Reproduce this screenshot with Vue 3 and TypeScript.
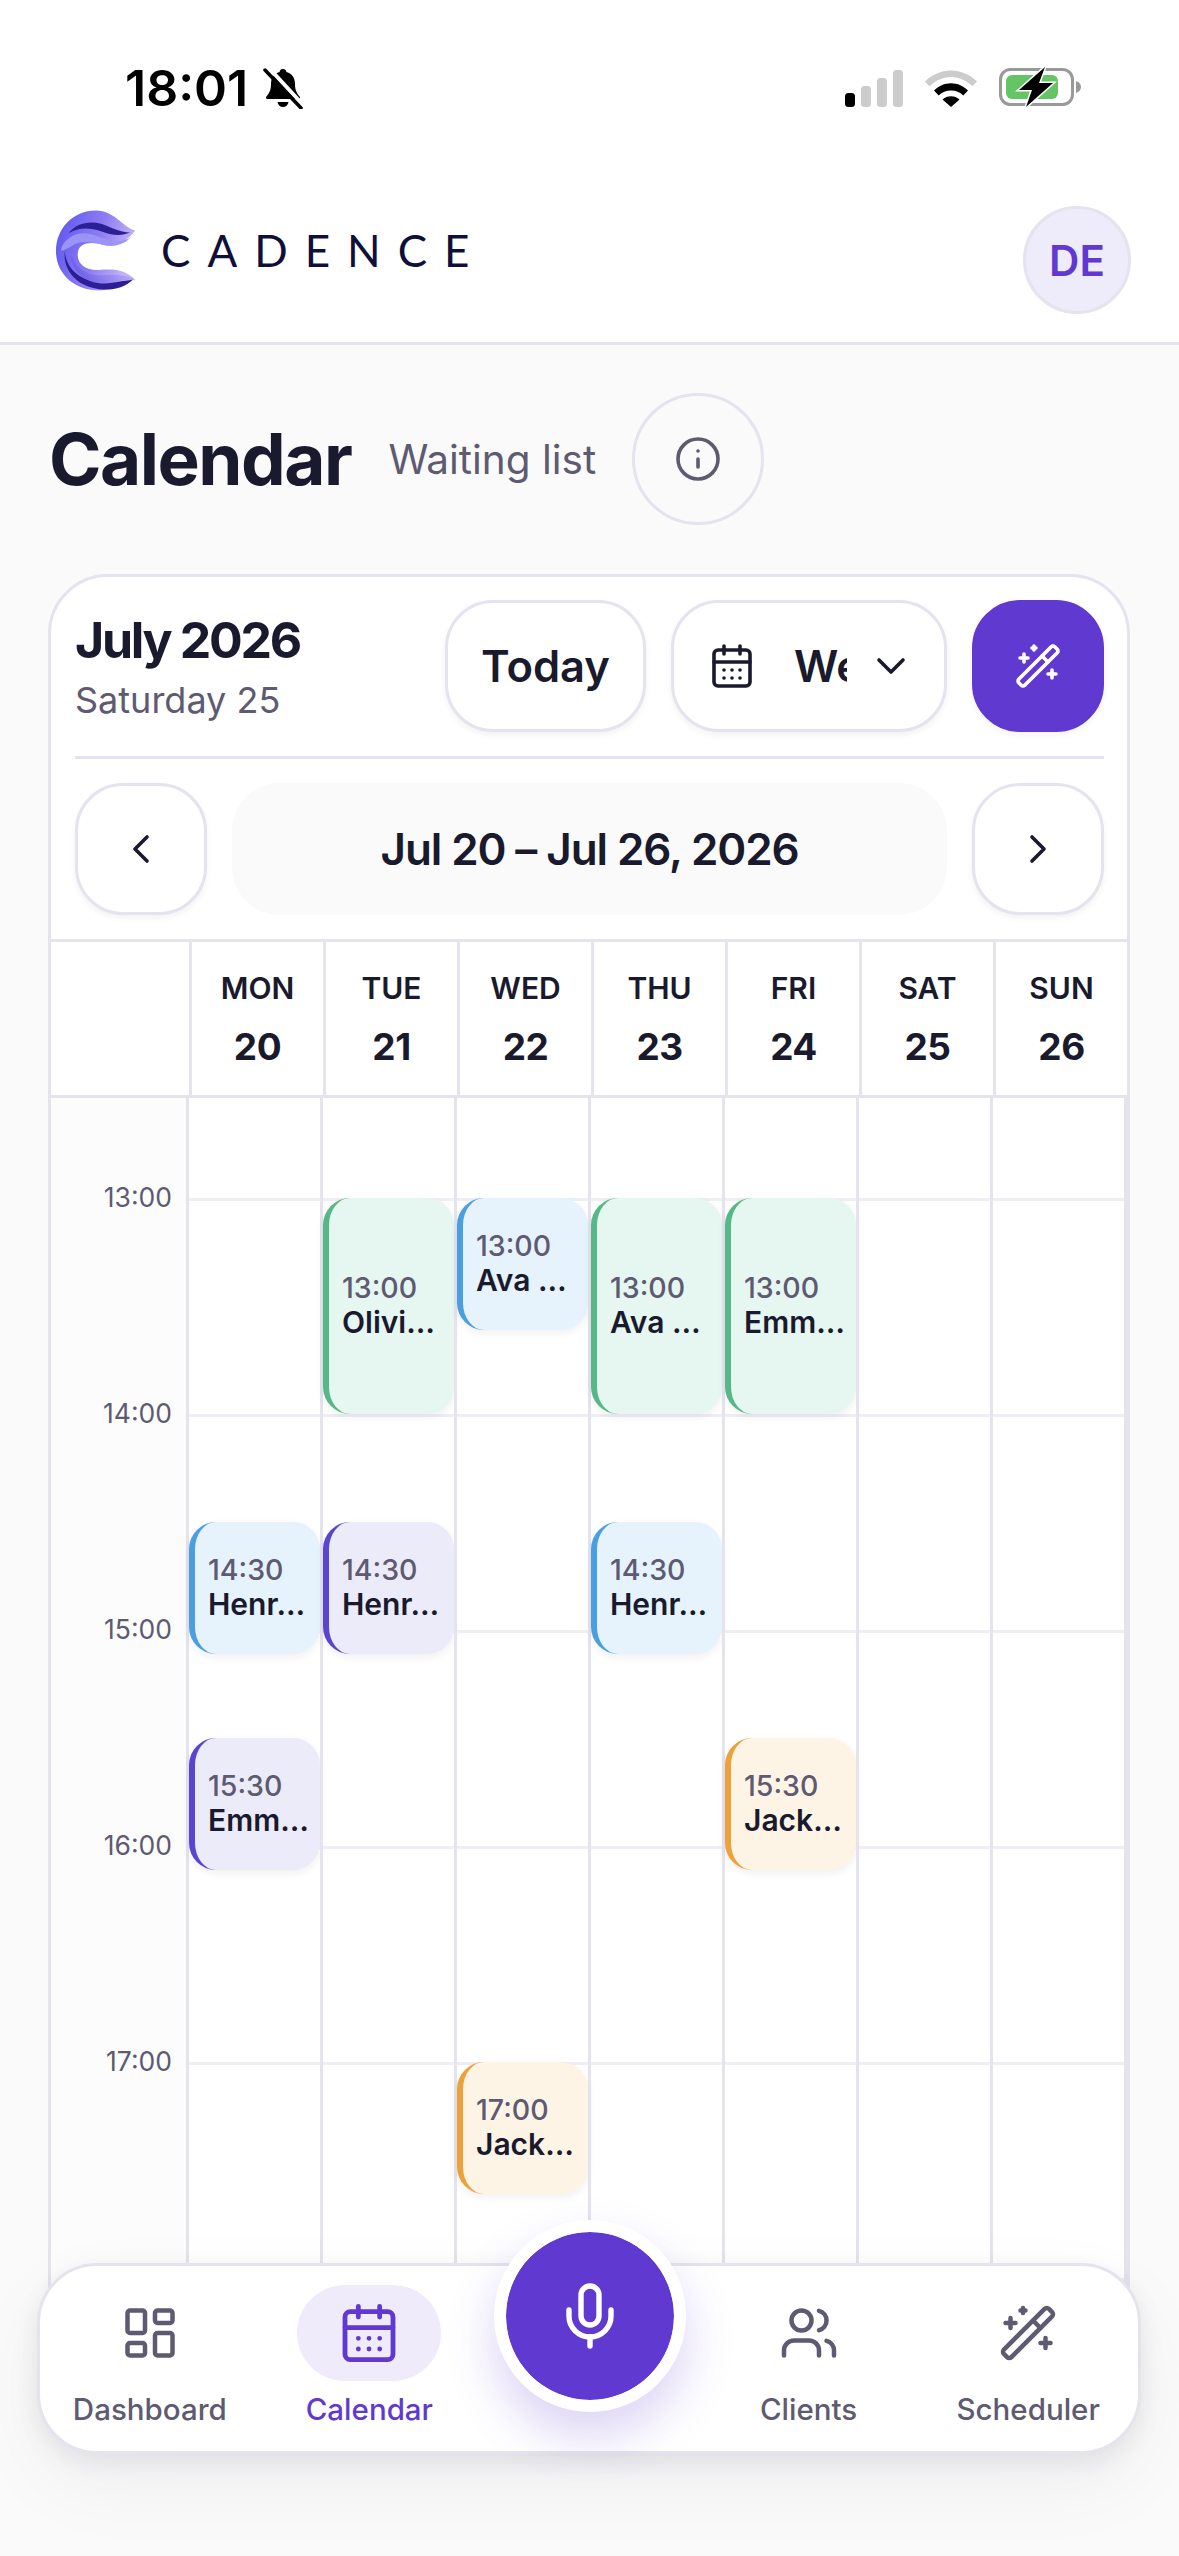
<template>
  <div class="page">
    <div class="status">
      <div class="status-left">
        <span class="clock">18:01</span>
        <svg class="bell" viewBox="0 0 40 42" width="40" height="42">
          <path d="M20 2c2 0 3.200 1.300 3.400 3 6 1.400 8.600 6.400 8.600 12 0 6 1.600 9 4.600 12.500.9 1.100.3 2.500-1.200 2.500H4.600c-1.500 0-2.100-1.400-1.200-2.500C6.400 26 8 23 8 17c0-5.600 2.600-10.600 8.600-12C16.800 3.300 18 2 20 2z" fill="#000" />
          <path d="M14.500 35h11c-.5 3-2.700 5-5.500 5s-5-2-5.500-5z" fill="#000" />
          <path d="M5 0l36 39" stroke="#fff" stroke-width="4" />
          <path d="M2 3l36 38" stroke="#000" stroke-width="3.500" stroke-linecap="round" />
        </svg>
      </div>
      <div class="status-right">
        <svg viewBox="0 0 58 37" width="58" height="37">
          <rect x="0" y="23" width="10" height="14" rx="3.500" fill="#000" />
          <rect x="16" y="16" width="10" height="21" rx="3.500" fill="#ccc" />
          <rect x="32" y="8" width="10" height="29" rx="3.500" fill="#ccc" />
          <rect x="48" y="0" width="10" height="37" rx="3.500" fill="#ccc" />
        </svg>
        <svg viewBox="0 0 52 37" width="52" height="37">
          <path d="M0 11.500C7 4.500 16 .5 26 .5s19 4 26 11l-4.500 4.800C41.500 10.500 34 7 26 7S10.500 10.500 4.500 16.300z" fill="#ccc" />
          <path d="M9 20.500C13.500 16 19.500 13.200 26 13.200s12.500 2.800 17 7.300l-4.700 5C35 22.300 30.800 20.500 26 20.500s-9 1.800-12.300 5z" fill="#000" />
          <path d="M17.500 29.500c2.200-2.100 5.300-3.300 8.500-3.300s6.300 1.200 8.500 3.300L26 37z" fill="#000" />
        </svg>
        <svg viewBox="0 0 84 40" width="84" height="40">
          <rect x="1.500" y="2.500" width="72" height="35" rx="10" fill="none" stroke="#999" stroke-width="3" />
          <rect x="7" y="8" width="52" height="24" rx="6" fill="#65c466" />
          <path d="M77 14c3 1 5 3 5 6s-2 5-5 6z" fill="#999" />
          <path d="M46 0L20 23h13l-6 17 27-24H40z" fill="#000" stroke="#fff" stroke-width="3" paint-order="stroke" />
        </svg>
      </div>
    </div>

    <header class="topbar">
      <div class="brand">
        <svg class="brand-mark" viewBox="0 0 240 240" width="80" height="81">
          <defs>
            <linearGradient id="lg-a" x1="0" y1="0" x2="1" y2="0.300">
              <stop offset="0" stop-color="#5a54ee" />
              <stop offset="0.600" stop-color="#8e7df2" />
              <stop offset="1" stop-color="#c4b2f6" />
            </linearGradient>
            <linearGradient id="lg-b" x1="0" y1="1" x2="1" y2="0.700">
              <stop offset="0" stop-color="#5b4fe6" />
              <stop offset="1" stop-color="#c0adf7" />
            </linearGradient>
          </defs>
          <path d="M238 60C205 100 175 112 140 103C115 95 65 90 65 133C65 165 95 182 135 178C175 174 210 178 238 208C205 205 180 240 130 240C55 240 0 190 0 122C0 55 50 0 120 0C175 0 200 50 238 60Z" fill="url(#lg-a)" />
          <path d="M38 68C60 38 100 30 135 40C165 50 190 66 222 66C195 78 165 74 135 62C100 50 65 50 38 68Z" fill="#2c1e94" />
          <path d="M14 120C20 90 50 68 85 68C120 70 150 92 185 92C200 92 215 88 226 78C210 100 175 112 140 103C115 95 75 88 50 105C35 114 22 122 14 120Z" fill="#9c93f6" />
          <path d="M26 122C30 175 75 214 135 214C170 214 200 214 232 206C205 232 170 240 130 236C70 230 20 185 26 122Z" fill="#2c1e94" />
          <path d="M44 120C48 165 88 196 135 194C170 192 205 190 236 206C205 206 170 222 130 218C80 214 38 170 44 120Z" fill="url(#lg-b)" />
        </svg>
        <span class="wordmark">CADENCE</span>
      </div>
      <button class="avatar">DE</button>
    </header>

    <div class="title-row">
      <h1>Calendar</h1>
      <span class="waiting">Waiting list</span>
      <button class="info-btn">
        <svg class="ico" viewBox="0 0 24 24" width="48" height="48">
          <circle cx="12" cy="12" r="10" />
          <path d="M12 16v-4" />
          <path d="M12 8h.01" />
        </svg>
      </button>
    </div>

    <section class="card">
      <div class="card-top">
        <div class="month">
          <div class="month-name">July 2026</div>
          <div class="month-day">Saturday 25</div>
        </div>
        <div class="actions">
          <button class="btn today">Today</button>
          <button class="btn view">
            <svg class="ico" viewBox="0 0 24 24" width="48" height="48">
              <path d="M8 2v4M16 2v4" />
              <rect x="3" y="4" width="18" height="18" rx="2" />
              <path d="M3 10h18M8 14h.01M12 14h.01M16 14h.01M8 18h.01M12 18h.01M16 18h.01" />
            </svg>
            <span class="view-label">Week</span>
            <svg class="ico" viewBox="0 0 24 24" width="48" height="48"><path d="m6 9 6 6 6-6" /></svg>
          </button>
          <button class="btn magic">
            <svg class="ico" viewBox="0 0 24 24" width="48" height="48">
              <path d="m21.64 3.640-1.280-1.280a1.210 1.210 0 0 0-1.720 0L2.360 18.640a1.210 1.210 0 0 0 0 1.720l1.280 1.280a1.200 1.200 0 0 0 1.720 0L21.640 5.360a1.200 1.200 0 0 0 0-1.720" />
              <path d="m14 7 3 3M5 6v4M19 14v4M10 2v2M7 8H3M21 16h-4M11 3H9" />
            </svg>
          </button>
        </div>
      </div>

      <div class="range-row">
        <button class="btn step">
          <svg class="ico" viewBox="0 0 24 24" width="48" height="48"><path d="m15 18-6-6 6-6" /></svg>
        </button>
        <div class="range">Jul 20 – Jul 26, 2026</div>
        <button class="btn step">
          <svg class="ico" viewBox="0 0 24 24" width="48" height="48"><path d="m9 18 6-6-6-6" /></svg>
        </button>
      </div>

      <div class="week-head">
        <div class="week-corner"></div>
        <div v-for="d in days" :key="d.name" class="week-day">
          <span class="week-name">{{ d.name }}</span>
          <span class="week-num">{{ d.num }}</span>
        </div>
      </div>

      <div class="week-body">
        <div class="gutter">
          <div v-for="h in hours" :key="h" class="gutter-slot">
            <span>{{ h }}</span>
          </div>
        </div>
        <div v-for="d in days" :key="d.name" class="day-col">
          <div class="slot-lead line"></div>
          <div v-for="h in hours" :key="h" class="slot line"></div>
          <div
            v-for="ev in eventsFor(d.num)"
            :key="ev.time + ev.name"
            class="event"
            :class="ev.tone"
            :style="{ top: topOf(ev.time) + 'px', height: ev.tall ? '216px' : '132px' }"
          >
            <span class="event-time">{{ ev.time }}</span>
            <span class="event-name">{{ ev.name }}</span>
          </div>
        </div>
      </div>
    </section>

    <nav class="tabbar">
      <a class="tab">
        <span class="tab-icon">
          <svg class="ico" viewBox="0 0 24 24" width="60" height="60">
            <rect x="3" y="3" width="7" height="9" rx="1" />
            <rect x="14" y="3" width="7" height="5" rx="1" />
            <rect x="14" y="12" width="7" height="9" rx="1" />
            <rect x="3" y="16" width="7" height="5" rx="1" />
          </svg>
        </span>
        <span>Dashboard</span>
      </a>
      <a class="tab active">
        <span class="tab-icon">
          <svg class="ico" viewBox="0 0 24 24" width="64" height="64">
            <path d="M8 2v4M16 2v4" />
            <rect x="3" y="4" width="18" height="18" rx="2" />
            <path d="M3 10h18M8 14h.01M12 14h.01M16 14h.01M8 18h.01M12 18h.01M16 18h.01" />
          </svg>
        </span>
        <span>Calendar</span>
      </a>
      <div></div>
      <a class="tab">
        <span class="tab-icon">
          <svg class="ico" viewBox="0 0 24 24" width="60" height="60">
            <path d="M16 21v-2a4 4 0 0 0-4-4H6a4 4 0 0 0-4 4v2" />
            <circle cx="9" cy="7" r="4" />
            <path d="M22 21v-2a4 4 0 0 0-3-3.870M16 3.130a4 4 0 0 1 0 7.750" />
          </svg>
        </span>
        <span>Clients</span>
      </a>
      <a class="tab">
        <span class="tab-icon">
          <svg class="ico" viewBox="0 0 24 24" width="60" height="60">
            <path d="m21.640 3.640-1.280-1.280a1.210 1.210 0 0 0-1.720 0L2.360 18.640a1.210 1.210 0 0 0 0 1.720l1.280 1.280a1.200 1.200 0 0 0 1.720 0L21.640 5.360a1.200 1.200 0 0 0 0-1.720" />
            <path d="m14 7 3 3M5 6v4M19 14v4M10 2v2M7 8H3M21 16h-4M11 3H9" />
          </svg>
        </span>
        <span>Scheduler</span>
      </a>
      <button class="mic">
        <svg class="ico" viewBox="0 0 24 24" width="72" height="72">
          <path d="M12 19v3" />
          <path d="M19 10v2a7 7 0 0 1-14 0v-2" />
          <rect x="9" y="2" width="6" height="13" rx="3" />
        </svg>
      </button>
    </nav>
  </div>
</template>

<script setup lang="ts">
interface CalEvent {
  day: number
  time: string
  name: string
  tone: 'green' | 'blue' | 'violet' | 'amber'
  tall?: boolean
}

const days = [
  { name: 'MON', num: 20 },
  { name: 'TUE', num: 21 },
  { name: 'WED', num: 22 },
  { name: 'THU', num: 23 },
  { name: 'FRI', num: 24 },
  { name: 'SAT', num: 25 },
  { name: 'SUN', num: 26 },
]

const hours = ['13:00', '14:00', '15:00', '16:00', '17:00', '18:00']

const events: CalEvent[] = [
  { day: 21, time: '13:00', name: 'Olivi…', tone: 'green', tall: true },
  { day: 22, time: '13:00', name: 'Ava …', tone: 'blue' },
  { day: 23, time: '13:00', name: 'Ava …', tone: 'green', tall: true },
  { day: 24, time: '13:00', name: 'Emm…', tone: 'green', tall: true },
  { day: 20, time: '14:30', name: 'Henr…', tone: 'blue' },
  { day: 21, time: '14:30', name: 'Henr…', tone: 'violet' },
  { day: 23, time: '14:30', name: 'Henr…', tone: 'blue' },
  { day: 20, time: '15:30', name: 'Emm…', tone: 'violet' },
  { day: 24, time: '15:30', name: 'Jack…', tone: 'amber' },
  { day: 22, time: '17:00', name: 'Jack…', tone: 'amber' },
]

const eventsFor = (day: number) => events.filter((e) => e.day === day)

// one hour is 216px, first line sits 100px below the top of the grid
const topOf = (time: string) => {
  const [h, m] = time.split(':').map(Number)
  return 100 + ((h - 13) * 60 + m) * 3.6
}
</script>

<style>
html,
body {
  margin: 0;
  background: #fafafb;
}
</style>

<style scoped>
.page {
  position: relative;
  width: 1179px;
  height: 2556px;
  overflow: hidden;
  background: #fafafb;
  font-family: Inter, 'Noto Sans', sans-serif;
  color: #1a1a2e;
}

button {
  font-family: inherit;
  cursor: pointer;
}

.ico {
  fill: none;
  stroke: currentColor;
  stroke-width: 1.800;
  stroke-linecap: round;
  stroke-linejoin: round;
  display: block;
  flex: none;
}

.status {
  height: 120px;
  box-sizing: border-box;
  background: #fff;
  padding: 67px 96px 0 125px;
  display: flex;
  justify-content: space-between;
  align-items: flex-start;
}

.status-left {
  display: flex;
  align-items: center;
  gap: 15px;
}

.clock {
  font-size: 50px;
  line-height: 42px;
  font-weight: 600;
  color: #000;
}

.status-right {
  display: flex;
  align-items: flex-end;
  gap: 22px;
}

.topbar {
  height: 225px;
  box-sizing: border-box;
  background: #fff;
  border-bottom: 3px solid #e4e3ee;
  padding: 86px 48px 0 56px;
  display: flex;
  justify-content: space-between;
  align-items: flex-start;
}

.brand {
  display: flex;
  align-items: center;
  gap: 25px;
  height: 88px;
}

.wordmark {
  font-family: Lato, sans-serif;
  font-size: 44px;
  letter-spacing: 17px;
  color: #0f0f3a;
  line-height: 1;
}

.avatar {
  width: 108px;
  height: 108px;
  border-radius: 50%;
  border: 3px solid #e4e3ee;
  background: #eeebfa;
  color: #6039d0;
  font-size: 42px;
  font-weight: 600;
  padding: 0;
}

.title-row {
  display: flex;
  align-items: center;
  padding: 48px 0 0 49px;
  height: 132px;
}

h1 {
  margin: 0;
  font-size: 71px;
  font-weight: 700;
  letter-spacing: -1.500px;
  color: #1a1a2e;
}

.waiting {
  margin-left: 37px;
  font-size: 40.500px;
  color: #5d5a72;
}

.info-btn {
  margin-left: 36px;
  width: 132px;
  height: 132px;
  border-radius: 50%;
  border: 3px solid #e4e3ee;
  background: transparent;
  color: #5d5a72;
  display: flex;
  align-items: center;
  justify-content: center;
  padding: 0;
}

.card {
  margin: 49px 0 0 48px;
  width: 1082px;
  height: 1846px;
  box-sizing: border-box;
  background: #fff;
  border: 3px solid #e4e3ee;
  border-radius: 60px;
  overflow: hidden;
}

.card-top {
  margin: 23px 23px 0 24px;
  padding-bottom: 24px;
  border-bottom: 3px solid #e4e3ee;
  display: flex;
  justify-content: space-between;
  align-items: center;
}

.month-name {
  font-size: 50px;
  font-weight: 700;
  letter-spacing: -2.300px;
  line-height: 64px;
}

.month-day {
  font-size: 36px;
  color: #5d5a72;
  line-height: 48px;
  margin-top: 4px;
}

.actions {
  display: flex;
  gap: 25px;
}

.btn {
  height: 132px;
  box-sizing: border-box;
  border: 3px solid #e4e3ee;
  border-radius: 48px;
  background: #fff;
  color: #1a1a2e;
  box-shadow: 0 3px 6px rgba(30, 30, 60, 0.06);
  display: flex;
  align-items: center;
  justify-content: center;
  padding: 0;
}

.today {
  width: 201px;
  font-size: 43.500px;
  font-weight: 600;
}

.view {
  width: 276px;
  justify-content: flex-start;
  padding-left: 34px;
}

.view-label {
  width: 53px;
  margin: 0 20px 0 38px;
  overflow: hidden;
  font-size: 43.500px;
  font-weight: 600;
  white-space: nowrap;
}

.magic {
  width: 132px;
  background: #6039d0;
  border-color: #6039d0;
  color: #fff;
}

.range-row {
  margin: 24px 23px 24px 24px;
  display: flex;
  align-items: center;
  gap: 25px;
}

.step {
  width: 132px;
  flex: none;
}

.range {
  flex: 1;
  height: 132px;
  border-radius: 48px;
  background: #fafafb;
  display: flex;
  align-items: center;
  justify-content: center;
  font-size: 44px;
  font-weight: 600;
  letter-spacing: -1.100px;
}

.week-head {
  display: grid;
  grid-template-columns: 138px repeat(7, 134px);
  height: 159px;
  box-sizing: border-box;
  border-top: 3px solid #e4e3ee;
  border-bottom: 3px solid #e4e3ee;
}

.week-day {
  border-left: 3px solid #e4e3ee;
  display: flex;
  flex-direction: column;
  align-items: center;
  padding-top: 28px;
}

.week-name {
  font-size: 30px;
  font-weight: 600;
  line-height: 36px;
}

.week-num {
  font-size: 37px;
  font-weight: 700;
  letter-spacing: -0.500px;
  line-height: 44px;
  margin-top: 19px;
}

.week-body {
  display: grid;
  grid-template-columns: 135px repeat(6, 134px) 137px;
}

.gutter {
  background: #fcfcfd;
}

.gutter-slot {
  height: 216px;
  display: flex;
  align-items: flex-end;
  justify-content: flex-end;
  padding-right: 14px;
  font-size: 26.500px;
  line-height: 32px;
  color: #5d5a72;
}

.gutter-slot:first-child {
  height: 99px;
}

.gutter-slot span {
  margin-bottom: -16px;
}

.slot-lead {
  height: 103px;
  box-sizing: border-box;
}

.day-col {
  position: relative;
  border-left: 3px solid #e4e3ee;
  min-width: 0;
}

.day-col:last-child {
  border-right: 3px solid #e4e3ee;
}

.line {
  border-bottom: 3px solid #efeef4;
}

.slot {
  height: 216px;
  box-sizing: border-box;
}

.event {
  position: absolute;
  left: 0;
  right: 0;
  box-sizing: border-box;
  border-radius: 27px;
  border-left: 6px solid;
  padding: 0 0 2px 13px;
  display: flex;
  flex-direction: column;
  justify-content: center;
  box-shadow: 0 3px 8px rgba(30, 30, 60, 0.07);
  line-height: 35px;
  white-space: nowrap;
  overflow: hidden;
}

.event-time {
  font-size: 28.500px;
  color: #5d5a72;
  font-weight: 500;
}

.event-name {
  font-size: 30px;
  color: #1a1a2e;
  font-weight: 600;
}

.green {
  background: #e6f6f0;
  border-color: #55b886;
}

.blue {
  background: #e6f3fc;
  border-color: #4a9fe0;
}

.violet {
  background: #ecebf9;
  border-color: #5a44d0;
}

.amber {
  background: #fdf4e6;
  border-color: #eca23a;
}

.tabbar {
  position: absolute;
  left: 37px;
  width: 1104px;
  top: 2263px;
  height: 191px;
  box-sizing: border-box;
  background: #fff;
  border: 3px solid #e4e3ee;
  border-radius: 60px;
  box-shadow: 0 8px 24px rgba(20, 20, 30, 0.08), 0 30px 80px rgba(20, 20, 30, 0.05);
  display: grid;
  grid-template-columns: repeat(5, 1fr);
  padding-top: 19px;
}

.tab {
  display: flex;
  flex-direction: column;
  align-items: center;
  gap: 10px;
  font-size: 29.500px;
  font-weight: 500;
  line-height: 36px;
  color: #5d5a72;
}

.tab-icon {
  width: 144px;
  height: 96px;
  border-radius: 48px;
  display: flex;
  align-items: center;
  justify-content: center;
}

.tab.active {
  color: #6039d0;
}

.active .tab-icon {
  background: #efebfb;
}

.mic {
  position: absolute;
  left: 453.500px;
  top: -46px;
  width: 192px;
  height: 192px;
  box-sizing: border-box;
  border-radius: 50%;
  border: 12px solid #fff;
  background: #6039d0;
  background-clip: padding-box;
  color: #fff;
  box-shadow: 0 24px 48px rgba(96, 57, 208, 0.22);
  display: flex;
  align-items: center;
  justify-content: center;
  padding: 0;
}
</style>
